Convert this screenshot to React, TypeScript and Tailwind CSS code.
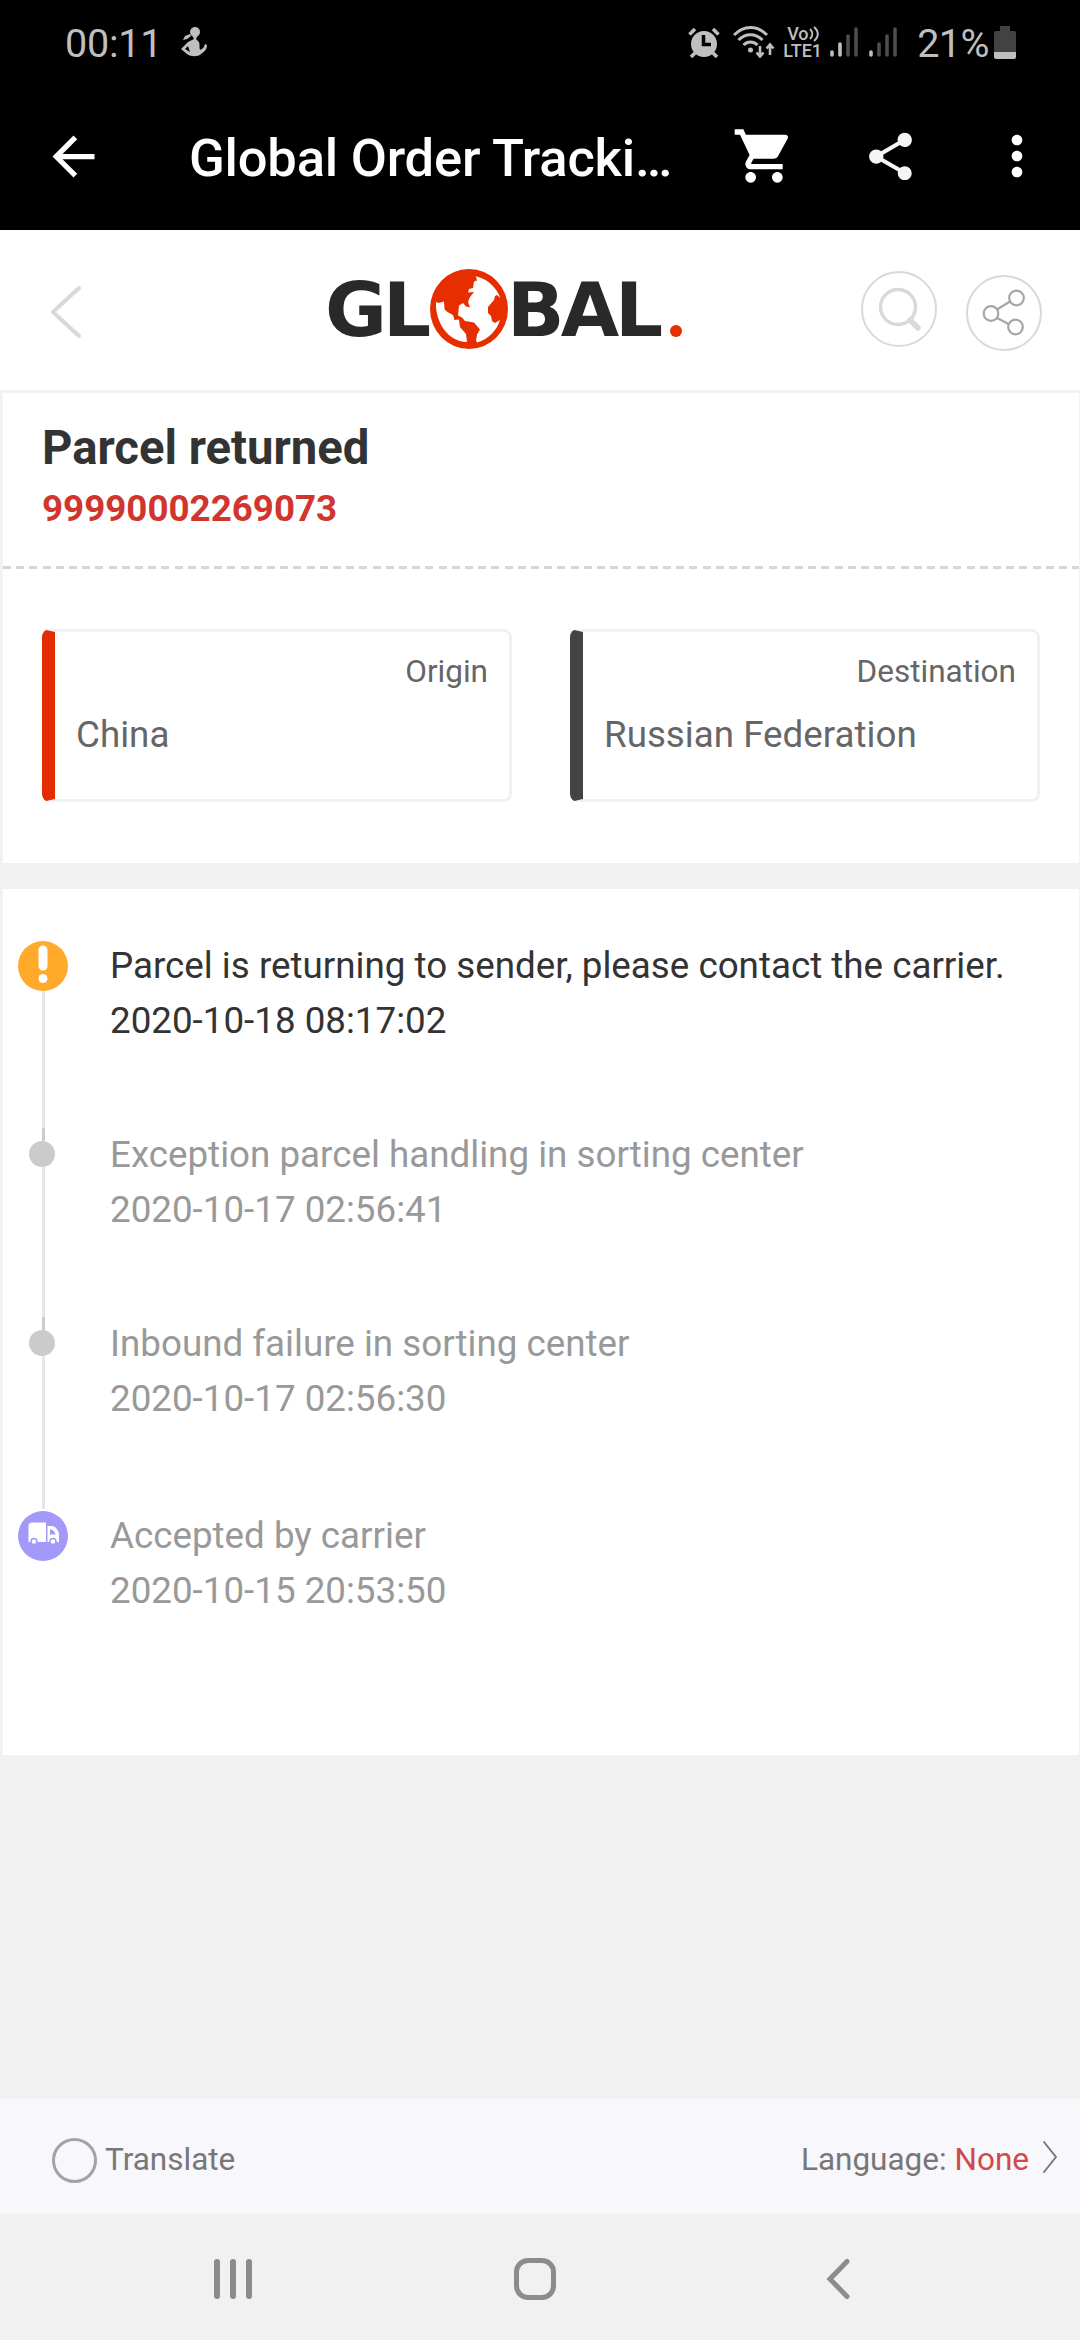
import { MdArrowBack, MdMoreVert, MdShare, MdShoppingCart } from 'react-icons/md';

const EVENTS = [
  {
    title: 'Parcel is returning to sender, please contact the carrier.',
    time: '2020-10-18 08:17:02',
    type: 'alert',
    row: 'h-[176px] text-[#333333]',
  },
  {
    title: 'Exception parcel handling in sorting center',
    time: '2020-10-17 02:56:41',
    type: 'dot',
    row: 'h-[189px] text-[#999999]',
  },
  {
    title: 'Inbound failure in sorting center',
    time: '2020-10-17 02:56:30',
    type: 'dot',
    row: 'h-[192px] text-[#999999]',
  },
  {
    title: 'Accepted by carrier',
    time: '2020-10-15 20:53:50',
    type: 'truck',
    row: 'text-[#999999]',
  },
];

const StatusBar = () => (
  <div className="flex h-[84px] items-center pl-[65px] pr-[64px] text-[#bfbfbf]">
    <span className="w-[94px] text-[39.5px] leading-[84px] tracking-[-0.2px] pt-[3px]">00:11</span>
    <svg viewBox="0 0 26 30" className="ml-[22px] h-[30px] w-[26px] fill-current">
      <circle cx="14" cy="5" r="5" />
      <path d="M11 4v4l2 4-6 3-7 7 6 5c4 3 11 3 14 0 4-3 6-5 6-9l-2-1c-1 4-3 5-5 6-1-3 0-5-1-8l-3-3 2-4zM7 19l2 6-5-3zM9 7 4 9l-2 4 4-1 4-3z" fillRule="evenodd" />
    </svg>

    <div className="ml-auto flex items-center">
      {/* Alarm */}
      <svg viewBox="0 0 32 31" className="h-[31px] w-[32px]">
        <circle cx="16" cy="17" r="13" fill="currentColor" />
        <path d="M1.500 7.500 7 2M30.500 7.500 25 2" stroke="currentColor" strokeWidth="3.500" />
        <path d="M7 26l-4 4M25 26l4 4" stroke="currentColor" strokeWidth="3.500" />
        <path d="M15.500 8v9.500H23" fill="none" stroke="#000" strokeWidth="3.500" />
      </svg>
      {/* Wifi */}
      <svg viewBox="0 0 42 32" className="ml-[13px] h-[32px] w-[42px]" fill="none" stroke="currentColor">
        <path d="M1 9C11-1 24-1 34 9M5.500 14c7-7 17-7 24 0M10.500 19c4-4 10-4 14 0" strokeWidth="3" />
        <circle cx="17.500" cy="24" r="2.500" fill="currentColor" stroke="none" />
        <path d="M27 20v10M23.500 26.500l3.500 4 3.500-4M37 29V19M33.500 22.500l3.500-4 3.500 4" strokeWidth="2.600" />
      </svg>
      <div className="ml-[8px] w-[40px] font-medium">
        <div className="flex h-[16px] items-center pl-[4px] text-[18px] leading-[16px]">
          Vo
          <svg viewBox="0 0 10 16" className="h-[16px] w-[10px]" fill="none" stroke="currentColor" strokeWidth="2">
            <path d="M1 3c3 3 3 7 0 10M5 1c5 4 5 10 0 14" />
          </svg>
        </div>
        <div className="text-[18px] leading-[17px]">LTE1</div>
      </div>
      <svg viewBox="0 0 28 30" className="ml-[7px] h-[30px] w-[28px]" strokeWidth="3.600" strokeLinecap="round">
        <path d="M2 25v3M10 17v11" stroke="#bfbfbf" />
        <path d="M18 9v19M26 2v26" stroke="#4d4d4d" />
      </svg>
      <svg viewBox="0 0 28 30" className="ml-[11px] h-[30px] w-[28px]" strokeWidth="3.600" strokeLinecap="round">
        <path d="M2 25v3" stroke="#bfbfbf" />
        <path d="M10 17v11M18 9v19M26 2v26" stroke="#4d4d4d" />
      </svg>
      <span className="ml-[20px] pt-[3px] text-[39.5px] leading-[84px] tracking-[-0.5px]">21%</span>
      <svg viewBox="0 0 22 33" className="ml-[5px] h-[33px] w-[22px]">
        <path d="M6 0h10v5h4a2 2 0 0 1 2 2v19H0V7a2 2 0 0 1 2-2h4z" fill="#424242" />
        <path d="M0 26h22v5a2 2 0 0 1-2 2H2a2 2 0 0 1-2-2z" fill="currentColor" />
      </svg>
    </div>
  </div>
);

const AppBar = () => (
  <div className="flex h-[146px] items-center pb-[2px] text-white">
    <MdArrowBack className="ml-[42px] size-[63px]" />
    <h1 className="ml-[84px] w-[490px] whitespace-nowrap pt-[3px] text-[52.5px] font-medium leading-[60px] tracking-[-0.2px]">
      Global Order Tracki…
    </h1>
    <MdShoppingCart className="ml-[53px] size-[64px]" />
    <MdShare className="ml-[66px] size-[57px] text-[#f5f5f5]" />
    <MdMoreVert className="ml-[66px] size-[64px]" />
  </div>
);

const Globe = () => (
  <svg viewBox="0 0 78 80" className="-mr-px ml-[3px] h-[80px] w-[78px] shrink-0">
    <ellipse cx="39" cy="40" rx="39" ry="40" fill="#e62e00" />
    <path
      d="M42 6.500C55 8 66 17 70.500 29l-3.500-3-2 1-1 4-6 7v6l3 3 1 5 3 2 5-3C67 61 59 70 47 73.500l-1-2 1-6 3-5-6-7-9-1.500-3-3.500-4-2 1-10 4-2.500 3 3.500 4 1-2-5.500 2-5 4-5-6 .5 1-3.500 4-1 1-6.500 3-1-1-4z"
      fill="#fff"
    />
    <path d="M6 33l2.500 1 5.500-1.500.5 8 3 2.500 5.500 3 1.500 5 4.500-.5 1 7.500 6 7 1 8C19 73 5 54 6 33z" fill="#fff" />
  </svg>
);

const SiteHeader = () => (
  <div className="flex h-[160px] items-start bg-white">
    <svg viewBox="0 0 32 56" className="ml-[50px] mt-[54px] h-[56px] w-[32px]" fill="none" stroke="#d9d9d9" strokeWidth="4" strokeLinecap="round" strokeLinejoin="round">
      <path d="M29 4 3 28l26 24" />
    </svg>
    <div className="ml-[243px] mt-[39px] flex w-[360px] items-start font-['DejaVu_Sans',sans-serif] text-[75.5px] font-bold leading-[83px] tracking-[-4px] text-[#292929]">
      <span>GL</span>
      <Globe />
      <span>BAL</span>
      <span className="ml-[11px] mt-[56px] size-[12px] shrink-0 rounded-full bg-[#e62e00]" />
    </div>
    <div className="ml-auto mt-[41px] size-[76px] rounded-full border-2 border-[#d9d9d9]">
      <svg viewBox="0 0 72 72" className="size-[72px]" fill="none" stroke="#d9d9d9">
        <circle cx="35" cy="34" r="17.500" strokeWidth="3.500" />
        <path d="M47 47l8 8" strokeWidth="5.500" strokeLinecap="round" />
      </svg>
    </div>
    <div className="ml-[29px] mr-[38px] mt-[45px] size-[76px] rounded-full border-2 border-[#d9d9d9]">
      <svg viewBox="0 0 72 72" className="size-[72px]" fill="none" stroke="#a6a6a6" strokeWidth="2.200">
        <circle cx="23" cy="36.500" r="7.300" />
        <circle cx="48.500" cy="21" r="7.300" />
        <circle cx="47.500" cy="50" r="7.300" />
        <path d="M29 32.500l13-8M29 41l12.500 6.500" />
      </svg>
    </div>
  </div>
);

const Marker = ({ type }: { type: string }) => {
  if (type === 'alert') {
    return (
      <svg viewBox="0 0 50 50" className="ml-[15px] mt-[-11px] size-[50px] shrink-0">
        <circle cx="25" cy="25" r="25" fill="#ffaa2b" />
        <path d="M25 9v16" stroke="#fff" strokeWidth="9" strokeLinecap="round" />
        <circle cx="25" cy="37.500" r="4.500" fill="#fff" />
      </svg>
    );
  }
  if (type === 'truck') {
    return (
      <svg viewBox="0 0 50 50" className="ml-[15px] mt-[2px] size-[50px] shrink-0">
        <circle cx="25" cy="25" r="25" fill="#a399f9" />
        <path d="M14 11.500h14V31H10.500V15a3.500 3.500 0 0 1 3.500-3.500z" fill="#fff" />
        <path d="M29.500 15H33c5 0 8 5 8 9v7H29.500z" fill="#fff" />
        <path d="M32 18.500c3 0 5 2 5.500 5H32z" fill="#a399f9" />
        <circle cx="16" cy="30.500" r="3" fill="#fff" stroke="#a399f9" strokeWidth="1.500" />
        <circle cx="35" cy="30.500" r="3" fill="#fff" stroke="#a399f9" strokeWidth="1.500" />
      </svg>
    );
  }
  return (
    <>
      <div className="ml-[39px] h-[13px] w-[3px] bg-[#cbcbcb]" />
      <div className="ml-[26px] size-[26px] shrink-0 rounded-full bg-[#cbcbcb]" />
    </>
  );
};

const Place = ({ label, name, accent }: { label: string; name: string; accent: string }) => (
  <div className={`h-[173px] w-[470px] rounded-[8px] border-[3px] border-l-[13px] border-[#f1f1f1] ${accent}`}>
    <div className="pr-[21px] pt-[22px] text-right text-[31.5px] leading-[36px]">{label}</div>
    <div className="pl-[21px] pt-[24px] text-[36.75px] leading-[42px]">{name}</div>
  </div>
);

const App = () => {
  return (
    <div className="flex h-[2340px] w-[1080px] flex-col overflow-hidden bg-[#f1f1f1] font-[Roboto,sans-serif]">
      <div className="bg-black">
        <StatusBar />
        <AppBar />
      </div>

      <SiteHeader />

      {/* Parcel summary */}
      <section className="h-[473px] border-l-[3px] border-r border-t-[3px] border-[#f3f3f3] bg-white">
        <div className="h-[173px] pl-[39px] pt-[27px]">
          <h2 className="text-[47.25px] font-bold leading-[56px] text-[#333333]">Parcel returned</h2>
          <p className="mt-[12px] text-[36.75px] font-bold leading-[42px] text-[#d0352e]">99990002269073</p>
        </div>
        <div className="h-[3px] bg-[repeating-linear-gradient(90deg,#d6d6d6_0px,#d6d6d6_8px,transparent_8px,transparent_13.2px)]" />
        <div className="flex justify-between pl-[39px] pr-[39px] pt-[60px] text-[#666666]">
          <Place label="Origin" name="China" accent="border-l-[#e32d00]" />
          <Place label="Destination" name="Russian Federation" accent="border-l-[#444444]" />
        </div>
      </section>

      {/* Timeline */}
      <section className="mt-[26px] h-[866px] border-l-[3px] border-r border-[#f3f3f3] bg-white pt-[63px]">
        {EVENTS.map((event) => (
          <div key={event.time} className={`flex text-[36.75px] ${event.row}`}>
            <div className="flex w-[107px] shrink-0 flex-col">
              <Marker type={event.type} />
              {event.type !== 'truck' && <div className="ml-[39px] w-[3px] grow bg-[#e6e6e6]" />}
            </div>
            <div className={event.type === 'alert' ? 'mt-[-14px]' : 'mt-[-1px]'}>
              <p className="whitespace-nowrap leading-[55px]">{event.title}</p>
              <p className="whitespace-nowrap leading-[55px]">{event.time}</p>
            </div>
          </div>
        ))}
      </section>

      <div className="grow" />

      {/* Translate bar */}
      <div className="flex h-[115px] items-center bg-[#f8f7fc] pl-[52px] pr-[22px] text-[31.5px] text-[#777777]">
        <span className="mt-[8px] size-[45px] rounded-full border-[3px] border-[#a3a3a3]" />
        <span className="ml-[8px] mt-[7px]">Translate</span>
        <span className="ml-auto mt-[7px]">
          Language: <span className="text-[#d04a47]">None</span>
        </span>
        <svg viewBox="0 0 16 34" className="ml-[13px] h-[34px] w-[16px]" fill="none" stroke="#777" strokeWidth="2" strokeLinecap="round" strokeLinejoin="round">
          <path d="M2 2l12 15L2 32" />
        </svg>
      </div>

      {/* System navigation */}
      <div className="flex h-[126px] items-center pl-[214px] pt-[4px]">
        <div className="flex gap-[10px]">
          <span className="h-[40px] w-[6px] rounded-full bg-[#8c8c8c]" />
          <span className="h-[40px] w-[6px] rounded-full bg-[#8c8c8c]" />
          <span className="h-[40px] w-[6px] rounded-full bg-[#8c8c8c]" />
        </div>
        <span className="ml-[262px] size-[42px] rounded-[14px] border-[5px] border-[#8c8c8c]" />
        <svg viewBox="0 0 24 42" className="ml-[270px] h-[42px] w-[24px]" fill="none" stroke="#8c8c8c" strokeWidth="5" strokeLinecap="round">
          <path d="M21 3.500 4 21l17 17.500" />
        </svg>
      </div>
    </div>
  );
};

export default App;
